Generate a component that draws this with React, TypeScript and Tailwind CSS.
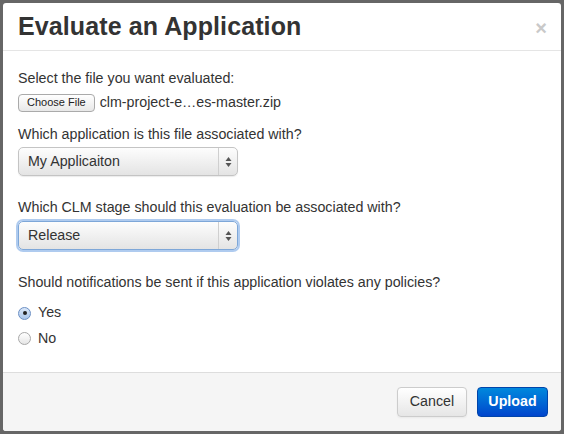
import React from 'react';

const font = { fontFamily: '"Liberation Sans", Arial, Helvetica, sans-serif' };

const SelectArrows = () => (
  <svg width="7" height="12" viewBox="0 0 7 12" className="text-[#555]">
    <path d="M3.5 1 L6.5 5 L0.5 5 Z" fill="currentColor" />
    <path d="M3.5 11 L6.5 7 L0.5 7 Z" fill="currentColor" />
  </svg>
);

const FakeSelect: React.FC<{ value: string; focused?: boolean }> = ({ value, focused }) => (
  <div
    className={
      'flex h-[29px] w-[220px] items-center rounded-[5px] border bg-gradient-to-b from-[#fdfdfd] to-[#e4e4e4] text-[14.25px] text-[#333] ' +
      (focused
        ? 'border-[#7ea7d8] shadow-[0_0_0_2px_rgba(110,160,225,0.55)]'
        : 'border-[#c4c4c4] shadow-[0_1px_1px_rgba(0,0,0,0.08)]')
    }
  >
    <span className="flex-1 pl-[9px]">{value}</span>
    <span className="flex h-full w-[19px] items-center justify-center border-l border-[#cfcfcf]">
      <SelectArrows />
    </span>
  </div>
);

const Radio: React.FC<{ checked?: boolean; label: string }> = ({ checked, label }) => (
  <label className="flex items-center gap-[7px] text-[14.25px] text-[#333]">
    <span
      className={
        'flex h-[13px] w-[13px] items-center justify-center rounded-full border bg-gradient-to-b ' +
        (checked
          ? 'border-[#6b8fc4] from-[#dbe8f9] to-[#a9c6ec]'
          : 'border-[#a8a8a8] from-[#ffffff] to-[#e6e6e6]')
      }
    >
      {checked && <span className="h-[4px] w-[4px] rounded-full bg-[#222]" />}
    </span>
    {label}
  </label>
);

export default function App() {
  return (
    <div className="h-[434px] w-[564px] bg-[#666] p-[3px]" style={font}>
      <div className="flex h-full w-full flex-col overflow-hidden rounded-[3px] bg-white">
        {/* header */}
        <div className="flex h-[48px] items-center justify-between border-b border-[#e5e5e5] pl-[15px] pr-[14px]">
          <h3 className="text-[25px] font-bold leading-none tracking-[0.1px] text-[#333]">Evaluate an Application</h3>
          <span className="mt-[2px] text-[20px] font-bold leading-none text-[#c9c9c9]">×</span>
        </div>

        {/* body */}
        <div className="flex-1 pl-[15px] pt-[17px] text-[14.25px] text-[#333]">
          <p className="leading-[20px]">Select the file you want evaluated:</p>
          <div className="mt-[4px] flex items-center gap-[5px]">
            <button className="h-[18px] rounded-[4px] border border-[#aaa] bg-gradient-to-b from-[#fff] to-[#e8e8e8] px-[8px] text-[11px] leading-none text-[#222]">
              Choose File
            </button>
            <span>clm-project-e…es-master.zip</span>
          </div>

          <p className="mt-[11px] leading-[20px]">Which application is this file associated with?</p>
          <div className="mt-[3px]">
            <FakeSelect value="My Applicaiton" />
          </div>

          <p className="mt-[21px] leading-[20px]">Which CLM stage should this evaluation be associated with?</p>
          <div className="mt-[4px]">
            <FakeSelect value="Release" focused />
          </div>

          <p className="mt-[22px] leading-[20px]">Should notifications be sent if this application violates any policies?</p>
          <div className="mt-[10px] flex flex-col gap-[4px]">
            <Radio checked label="Yes" />
            <Radio label="No" />
          </div>
        </div>

        {/* footer */}
        <div className="flex h-[59px] items-center justify-end gap-[10px] border-t border-[#ddd] bg-[#f5f5f5] pr-[13px]">
          <button className="h-[30px] w-[70px] rounded-[4px] border border-[#ccc] bg-gradient-to-b from-[#ffffff] to-[#e6e6e6] text-[14.25px] text-[#333] shadow-[inset_0_1px_0_rgba(255,255,255,0.2),0_1px_2px_rgba(0,0,0,0.05)]">
            Cancel
          </button>
          <button className="h-[30px] w-[71px] rounded-[4px] border border-[#0044aa] bg-gradient-to-b from-[#0088dd] to-[#0044cc] text-[14.25px] font-bold text-white">
            Upload
          </button>
        </div>
      </div>
    </div>
  );
}
